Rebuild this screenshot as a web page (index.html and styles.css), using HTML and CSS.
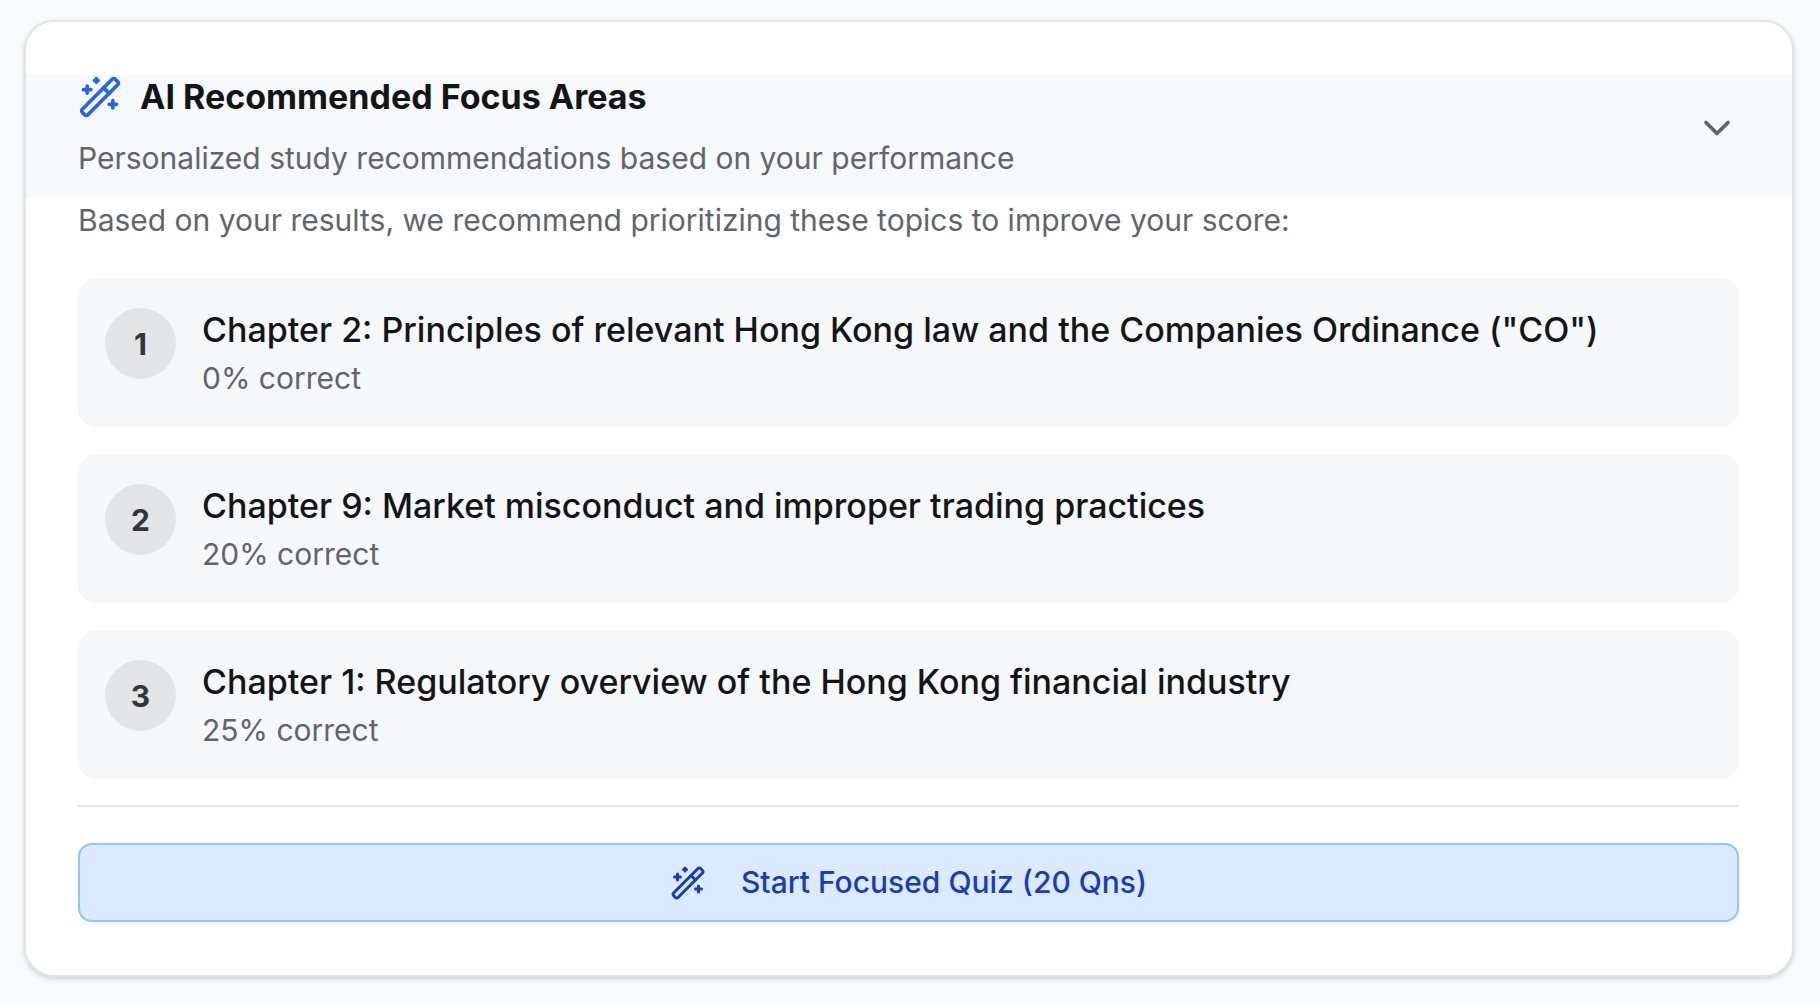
FILE: index.html
```html
<!DOCTYPE html>
<html lang="en">
<head>
<meta charset="utf-8">
<meta name="viewport" content="width=device-width, initial-scale=1">
<title>AI Recommended Focus Areas</title>
<link rel="stylesheet" href="styles.css">
</head>
<body>
<svg class="sprite" aria-hidden="true">
  <symbol id="wand" viewBox="0 0 24 24">
    <path d="m21.64 3.64-1.28-1.28a1.21 1.21 0 0 0-1.72 0L2.36 18.64a1.21 1.21 0 0 0 0 1.72l1.28 1.28a1.2 1.2 0 0 0 1.72 0L21.64 5.36a1.2 1.2 0 0 0 0-1.72"/>
    <path d="m14 7 3 3M5 6v4M19 14v4M10 2v2M7 8H3M21 16h-4M11 3H9"/>
  </symbol>
</svg>
<main class="card">
  <header class="card-header">
    <div class="heading">
      <h1 class="title"><svg class="icon title-icon" aria-hidden="true"><use href="#wand"/></svg>AI Recommended Focus Areas</h1>
      <p class="text">Personalized study recommendations based on your performance</p>
    </div>
    <button class="toggle" type="button" aria-label="Toggle focus areas" aria-expanded="true">
      <svg class="icon" viewBox="0 0 24 24" aria-hidden="true"><path d="m6 9 6 6 6-6"/></svg>
    </button>
  </header>
  <div class="card-body">
    <p class="text">Based on your results, we recommend prioritizing these topics to improve your score:</p>
    <ol class="topics">
      <li class="topic">
        <span class="rank">1</span>
        <div class="topic-info">
          <h2 class="topic-title">Chapter 2: Principles of relevant Hong Kong law and the Companies Ordinance ("CO")</h2>
          <p class="text">0% correct</p>
        </div>
      </li>
      <li class="topic">
        <span class="rank">2</span>
        <div class="topic-info">
          <h2 class="topic-title">Chapter 9: Market misconduct and improper trading practices</h2>
          <p class="text">20% correct</p>
        </div>
      </li>
      <li class="topic">
        <span class="rank">3</span>
        <div class="topic-info">
          <h2 class="topic-title">Chapter 1: Regulatory overview of the Hong Kong financial industry</h2>
          <p class="text">25% correct</p>
        </div>
      </li>
    </ol>
    <div class="actions">
      <button class="start" type="button"><svg class="icon start-icon" aria-hidden="true"><use href="#wand"/></svg>Start Focused Quiz (20 Qns)</button>
    </div>
  </div>
</main>
</body>
</html>
```
FILE: styles.css
```css
* {
  box-sizing: border-box;
  margin: 0;
  padding: 0;
}

body {
  padding: 20px 26px 26px 24px;
  background: #f8fafc;
  color: #131519;
  font-family: Inter, "Liberation Sans", sans-serif;
}

.sprite {
  display: none;
}

.icon {
  width: 44px;
  height: 44px;
  flex: none;
  fill: none;
  stroke: currentColor;
  stroke-width: 2;
  stroke-linecap: round;
  stroke-linejoin: round;
}

.card {
  padding: 53px 0;
  border: 2px solid #e3e4e6;
  border-radius: 30px;
  background: #fff;
  box-shadow: 0 2px 6px rgba(0, 0, 0, 0.1), 0 2px 4px -1px rgba(0, 0, 0, 0.1);
}

.card-header {
  display: flex;
  align-items: center;
  justify-content: space-between;
  padding: 0 53px 18px 52px;
  background: #f7f8fa;
}

.heading {
  display: grid;
  gap: 17px;
}

.title {
  display: flex;
  align-items: center;
  gap: 18px;
  font-size: 34px;
  font-weight: 650;
  line-height: 44px;
}

.title-icon {
  color: #2563eb;
}

.text {
  color: #62646c;
  font-size: 30px;
  line-height: 44px;
}

.toggle {
  display: flex;
  border: 0;
  background: none;
  color: #62646c;
  cursor: pointer;
}

.card-body {
  padding: 0 53px 0 52px;
}

.topics {
  display: grid;
  gap: 27px;
  margin: 36px 0 26px;
  list-style: none;
}

.topic {
  display: flex;
  align-items: flex-start;
  gap: 26px;
  padding: 25px 27px 27px;
  border-radius: 18px;
  background: #f6f7f9;
}

.rank {
  display: grid;
  place-items: center;
  flex: none;
  width: 71px;
  height: 71px;
  margin-top: 5px;
  border-radius: 50%;
  background: #e3e4e6;
  color: #33353d;
  font-size: 30px;
  font-weight: 650;
}

.topic-title {
  font-size: 34px;
  font-weight: 500;
  line-height: 53px;
}

.actions {
  padding-top: 36px;
  border-top: 2px solid #e3e4e6;
}

.start {
  display: flex;
  align-items: center;
  justify-content: center;
  gap: 35px;
  width: 100%;
  padding: 16px;
  border: 2px solid #90c5ff;
  border-radius: 14px;
  background: #dbeafe;
  box-shadow: 0 2px 4px rgba(0, 0, 0, 0.05);
  color: #193cb8;
  font-family: inherit;
  font-size: 30px;
  font-weight: 500;
  line-height: 43px;
  cursor: pointer;
}

.start-icon {
  width: 36px;
  height: 36px;
}
```
